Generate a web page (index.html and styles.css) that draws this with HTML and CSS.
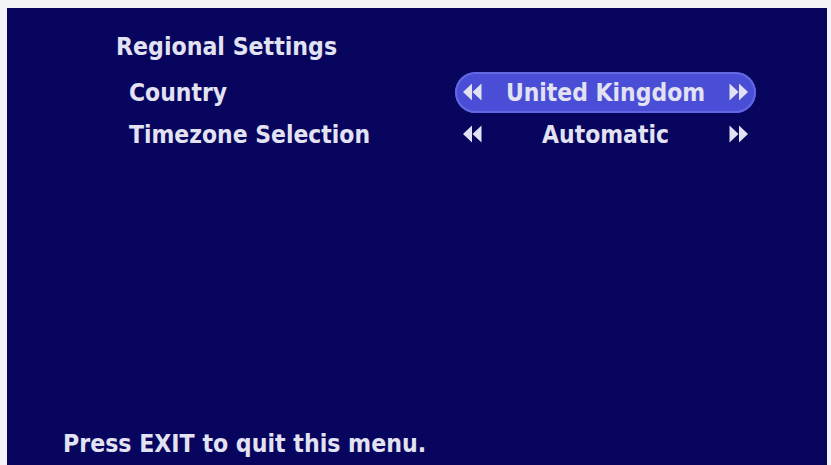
FILE: index.html
```html
<!DOCTYPE html>
<html>
<head>
<meta charset="utf-8">
<link rel="stylesheet" href="styles.css">
</head>
<body>
<div class="screen">
  <div class="title">Regional Settings</div>
  <div class="rows">
    <div class="row">
      <div class="label">Country</div>
      <div class="value selected">
        <svg class="arrow" viewBox="0 0 20 18"><path d="M10 0.5 L1 9 L10 17.5 Z M19.5 0.5 L10.5 9 L19.5 17.5 Z"/></svg>
        <span class="text">United Kingdom</span>
        <svg class="arrow" viewBox="0 0 20 18"><path d="M0.5 0.5 L9.5 9 L0.5 17.5 Z M10 0.5 L19 9 L10 17.5 Z"/></svg>
      </div>
    </div>
    <div class="row">
      <div class="label">Timezone Selection</div>
      <div class="value">
        <svg class="arrow" viewBox="0 0 20 18"><path d="M10 0.5 L1 9 L10 17.5 Z M19.5 0.5 L10.5 9 L19.5 17.5 Z"/></svg>
        <span class="text">Automatic</span>
        <svg class="arrow" viewBox="0 0 20 18"><path d="M0.5 0.5 L9.5 9 L0.5 17.5 Z M10 0.5 L19 9 L10 17.5 Z"/></svg>
      </div>
    </div>
  </div>
  <div class="footer">Press EXIT to quit this menu.</div>
</div>
</body>
</html>
```
FILE: styles.css
```css
html, body {
  height: 100%;
}
body {
  margin: 0;
  padding: 8px 4px 0 7px;
  box-sizing: border-box;
  background: #f4f4f8;
  font-family: "DejaVu Sans Condensed", "DejaVu Sans", sans-serif;
  font-weight: bold;
  color: #e2e2f2;
}
.screen {
  height: 100%;
  background: #07055e;
  display: flex;
  flex-direction: column;
  box-sizing: border-box;
  padding: 0 0 6px 0;
}
.title {
  font-size: 24.6px;
  line-height: 30px;
  margin: 24px 0 0 109px;
}
.rows {
  display: flex;
  flex-direction: column;
  gap: 2px;
  margin-top: 10px;
}
.row {
  display: flex;
  align-items: center;
  height: 40px;
}
.label {
  font-size: 24.4px;
  width: 326px;
  padding-left: 122px;
}
.value {
  width: 301px;
  height: 41px;
  box-sizing: border-box;
  display: flex;
  align-items: center;
  justify-content: space-between;
  padding: 0 7px 0 7px;
  border-radius: 21px;
  font-size: 24.4px;
}
.value.selected {
  background: #4a4ed6;
  box-shadow: inset 0 0 0 2px #6367e2;
}
.arrow {
  width: 20px;
  height: 18px;
  fill: #e2e2f2;
}
.text {
  flex: 1;
  text-align: center;
}
.footer {
  margin-top: auto;
  margin-left: 56px;
  font-size: 24.6px;
  line-height: 30px;
}
```
